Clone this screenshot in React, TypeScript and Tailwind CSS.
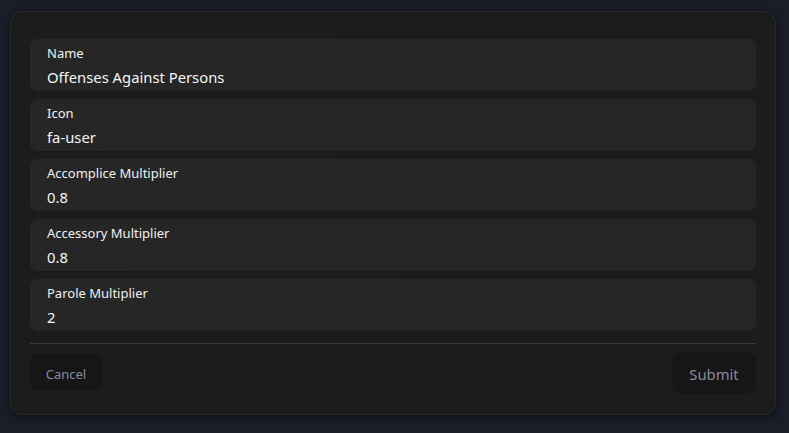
import React from "react";

const fields = [
  { label: "Name", value: "Offenses Against Persons" },
  { label: "Icon", value: "fa-user" },
  { label: "Accomplice Multiplier", value: "0.8" },
  { label: "Accessory Multiplier", value: "0.8" },
  { label: "Parole Multiplier", value: "2" },
];

export default function App() {
  return (
    <div
      className="w-[789px] h-[433px] bg-[#1a1e29] pt-[11px] pl-[10px]"
      style={{ fontFamily: '"Noto Sans", "Open Sans", sans-serif' }}
    >
      <div className="w-[766px] h-[404px] rounded-[12px] bg-[#1c1c1c] border border-[#2a2a2a] shadow-[0_2px_8px_rgba(0,0,0,0.5)] px-[19px] pt-[27px] flex flex-col">
        <div className="flex flex-col gap-[8px]">
          {fields.map((f) => (
            <div
              key={f.label}
              className="h-[52px] rounded-[8px] bg-gradient-to-r from-[#262626] to-[#252525] px-[17px] pt-[5px]"
            >
              <div className="text-[13px] leading-[19px] text-[#f0f0f0]">{f.label}</div>
              <div className="text-[14.8px] leading-[22px] mt-[3px] text-[#f5f5f5]">{f.value}</div>
            </div>
          ))}
        </div>
        <div className="mt-[12px] h-px bg-[#3a3a3a]" />
        <div className="flex justify-between items-start mt-[8px]">
          <button className="mt-[2px] h-[36px] w-[72px] rounded-[8px] bg-[#161616] text-[13px] pt-[5px] text-[#868b9c]">
            Cancel
          </button>
          <button className="h-[42px] w-[84px] rounded-[10px] bg-[#161616] text-[14.8px] pt-[2px] text-[#868b9c]">
            Submit
          </button>
        </div>
      </div>
    </div>
  );
}
